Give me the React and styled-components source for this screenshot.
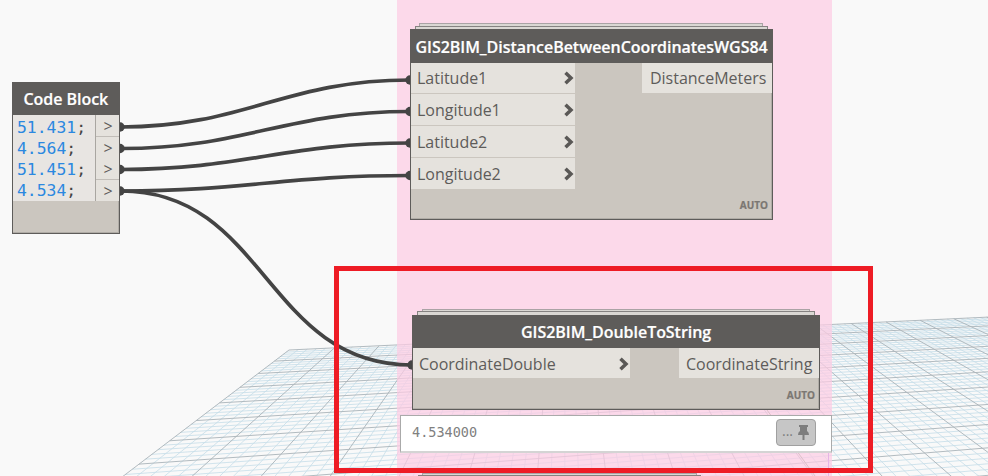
import React from 'react';
import styled, { createGlobalStyle } from 'styled-components';

const Global = createGlobalStyle`
  * { box-sizing: border-box; }
  body { margin: 0; background: #f9f9f9; overflow: hidden; }
`;

const Canvas = styled.main`
  position: relative;
  width: 988px;
  height: 476px;
  overflow: hidden;
  background: #f9f9f9;
  font-family: 'Open Sans', sans-serif;
`;

const Layer = styled.svg`
  position: absolute;
  inset: 0;
  width: 988px;
  height: 476px;
  pointer-events: none;
`;

const Group = styled.div`
  position: absolute;
  left: 397px;
  top: 0;
  width: 435px;
  height: 476px;
  background: rgba(252, 204, 227, 0.72);
`;

const NodeFrame = styled.section`
  position: absolute;
  left: ${(p) => p.$x}px;
  top: ${(p) => p.$y}px;
  width: ${(p) => p.$w}px;
  height: ${(p) => p.$h}px;
  display: flex;
  flex-direction: column;
  border: 1px solid #5e5c5a;
  background: #cbc6bf;
  box-shadow: inset -1px -1px 0 #b0aca6;
`;

const StackEdge = styled.div`
  position: absolute;
  left: ${(p) => p.$x}px;
  top: ${(p) => p.$y}px;
  width: ${(p) => p.$w}px;
  height: 9px;
  border: 1px solid ${(p) => (p.$front ? '#858281' : '#aaa3a5')};
  background: #dad7d3;
`;

const Header = styled.h2`
  margin: -1px -1px 0;
  height: ${(p) => p.$h}px;
  flex: none;
  display: flex;
  align-items: center;
  justify-content: center;
  background: #5e5c5a;
  color: #fff;
  font-size: 16px;
  line-height: 22px;
  font-weight: 600;
  white-space: nowrap;
`;

const Title = styled.span`
  width: ${(p) => p.$w}px;
  letter-spacing: -0.04px;
  padding-top: 1px;
  -webkit-text-stroke: 0.2px #fff;
`;

const Ports = styled.div`
  display: flex;
  justify-content: space-between;
  align-items: flex-start;
`;

const PortColumn = styled.div`
  display: grid;
  width: ${(p) => p.$w}px;
  grid-auto-rows: auto;
  row-gap: 1px;
`;

const Port = styled.div`
  height: ${(p) => (p.$short ? 30 : 31)}px;
  display: flex;
  align-items: center;
  justify-content: space-between;
  padding: ${(p) => p.$drop || 0}px 0 0 ${(p) => p.$pad}px;
  background: #e5e2dd;
  color: #5e5c5a;
  font-size: 16px;
  line-height: 30px;
  letter-spacing: -0.02px;
  white-space: nowrap;
`;

const Auto = styled.span`
  margin: auto 4px 7px auto;
  color: #7b7772;
  font-size: 10px;
  line-height: 14px;
  font-weight: 700;
  -webkit-text-stroke: 0.2px #7b7772;
`;

const Chevron = styled.svg`
  width: 12px;
  height: 16px;
`;

const CodeBody = styled.div`
  display: grid;
  grid-template-columns: 83px 1fr;
  height: 86px;
`;

const Code = styled.div`
  padding: 2px 0 0 4px;
  background: #e8e5e2;
  border-right: 1px solid #a9a6a1;
  font: 16.4px/21.4px 'DejaVu Sans Mono', monospace;
`;

const CodeLine = styled.div`
  height: 21px;
  color: #444;
  white-space: pre;
`;

const NumberText = styled.span`
  color: #2b88e0;
`;

const Outputs = styled.div`
  display: grid;
  grid-template-rows: repeat(4, 21.5px);
`;

const Output = styled.div`
  display: flex;
  align-items: center;
  justify-content: center;
  padding: 1px 0 0 1px;
  background: #e5e2dd;
  border-bottom: ${(p) => (p.$line ? '1px solid #c1bdb8' : '0')};
  color: #5e5c5a;
  font-size: 16px;
  line-height: 20px;
`;

const Preview = styled.div`
  position: absolute;
  left: 400px;
  top: 415px;
  width: 432px;
  height: 38px;
  display: flex;
  align-items: flex-start;
  justify-content: space-between;
  padding: 3px 15px 0 11px;
  border: 1px solid #aaa;
  border-bottom: 2px solid #d4d4d4;
  background: #fff;
`;

const Value = styled.span`
  color: #808080;
  font: 13.5px/26px 'DejaVu Sans Mono', monospace;
`;

const PinButton = styled.button`
  width: 40px;
  height: 27px;
  display: flex;
  align-items: center;
  justify-content: space-between;
  padding: 0 5px;
  border: 1px solid #a0a0a0;
  border-radius: 4px;
  background: #c6c6c6;
  color: #7d7d7d;
  font: 14px/20px 'Open Sans', sans-serif;
`;

const Dots = styled.span`
  padding-bottom: 3px;
`;

const Highlight = styled.div`
  position: absolute;
  left: 334px;
  top: 266px;
  width: 539px;
  height: 207px;
  border: 5px solid #ee1c25;
`;

const project = (u, v) => {
  const a = 0.0103 * u;
  const b = -0.0503 * v;
  const w = 1 + a + b;
  return [(289 + a * 4750 + b * 565) / w, (350 + (a + b) * 140) / w];
};

const segment = (u1, v1, u2, v2) => {
  const [x1, y1] = project(u1, v1);
  const [x2, y2] = project(u2, v2);
  return `M${x1.toFixed(2)} ${y1.toFixed(2)}L${x2.toFixed(2)} ${y2.toFixed(2)}`;
};

const gridPath = (major) => {
  const parts = [];
  for (let i = 0; i <= 150; i += 1) {
    if ((i % 5 === 0) === major) parts.push(segment(i / 5, 0, i / 5, 16));
  }
  for (let j = 0; j <= 80; j += 1) {
    if ((j % 5 === 0) === major) parts.push(segment(0, j / 5, 30, j / 5));
  }
  return parts.join('');
};

const Grid = () => (
  <Layer viewBox="0 0 988 476" fill="none">
    <path d={gridPath(false)} stroke="#c5dde9" strokeWidth="0.8" />
    <path d={gridPath(true)} stroke="#a9b3b9" strokeWidth="0.9" />
    <path d="M767 410L815 476" stroke="#8ba184" />
    <path d="M828.5 452V476" stroke="#a878e8" />
  </Layer>
);

const wires = [
  'M121 127C245 127 285 80 410 80',
  'M121 148.500C245 148.500 285 111.500 410 111.500',
  'M121 169.500C245 169.500 285 143 410 143',
  'M121 191C245 191 285 175.500 410 175.500',
  'M121 191C266 191 266 365 412 365',
];

const dots = [
  [120, 127], [120, 148.5], [120, 169.5], [120, 191],
  [410, 80], [410, 111.5], [410, 143], [410, 175.5], [412, 365],
];

const Wires = () => (
  <Layer viewBox="0 0 988 476" fill="none">
    {wires.map((d) => <path key={d} d={d} stroke="#444" strokeWidth="3.7" />)}
    {dots.map(([x, y]) => <circle key={`${x}-${y}`} cx={x} cy={y} r="4.7" fill="#444" />)}
  </Layer>
);

const InputPort = ({ name, pad, short, drop }) => (
  <Port $pad={pad} $short={short} $drop={drop}>
    {name}
    <Chevron viewBox="0 0 12 16" fill="none">
      <path d="M2.500 2.700L8 8L2.500 13.300" stroke="#5a5856" strokeWidth="3.500" />
    </Chevron>
  </Port>
);

export default function App() {
  return (
    <Canvas>
      <Global />
      <Grid />
      <Group />
      <Wires />

      <NodeFrame $x={12} $y={82} $w={108} $h={152}>
        <Header $h={33}><Title $w={85}>Code Block</Title></Header>
        <CodeBody>
          <Code>
            {['51.431', '4.564', '51.451', '4.534'].map((n) => (
              <CodeLine key={n}><NumberText>{n}</NumberText>;</CodeLine>
            ))}
          </Code>
          <Outputs>
            {[1, 0, 1, 0].map((line, i) => <Output key={i} $line={line}>&gt;</Output>)}
          </Outputs>
        </CodeBody>
      </NodeFrame>

      <StackEdge $x={419} $y={23} $w={344} />
      <StackEdge $front $x={415} $y={26} $w={353} />
      <NodeFrame $x={410} $y={29} $w={363} $h={191}>
        <Header $h={34}><Title $w={352}>GIS2BIM_DistanceBetweenCoordinatesWGS84</Title></Header>
        <Ports>
          <PortColumn $w={164}>
            <InputPort name="Latitude1" pad={6} short />
            <InputPort name="Longitude1" pad={6} />
            <InputPort name="Latitude2" pad={6} />
            <InputPort name="Longitude2" pad={6} />
          </PortColumn>
          <PortColumn $w={130}><Port $pad={8} $short>DistanceMeters</Port></PortColumn>
        </Ports>
        <Auto>AUTO</Auto>
      </NodeFrame>

      <StackEdge $x={422} $y={309} $w={388} />
      <StackEdge $front $x={417} $y={311} $w={398} />
      <NodeFrame $x={412} $y={315} $w={408} $h={95}>
        <Header $h={33}><Title $w={190}>GIS2BIM_DoubleToString</Title></Header>
        <Ports>
          <PortColumn $w={217}><InputPort name="CoordinateDouble" pad={6} short drop={1} /></PortColumn>
          <PortColumn $w={140}><Port $pad={7} $short $drop={1}>CoordinateString</Port></PortColumn>
        </Ports>
        <Auto>AUTO</Auto>
      </NodeFrame>

      <Preview>
        <Value>4.534000</Value>
        <PinButton>
          <Dots>...</Dots>
          <svg width="13" height="17" viewBox="0 0 13 17" fill="#7d7d7d">
            <path d="M2 1H11V3H10V7Q12 8 12 11H7.500V16H5.500V11H1Q1 8 3 7V3H2Z" />
          </svg>
        </PinButton>
      </Preview>
      <StackEdge $x={422} $y={473} $w={275} />
      <StackEdge $front $x={418} $y={475} $w={283} />
      <Highlight />
    </Canvas>
  );
}
